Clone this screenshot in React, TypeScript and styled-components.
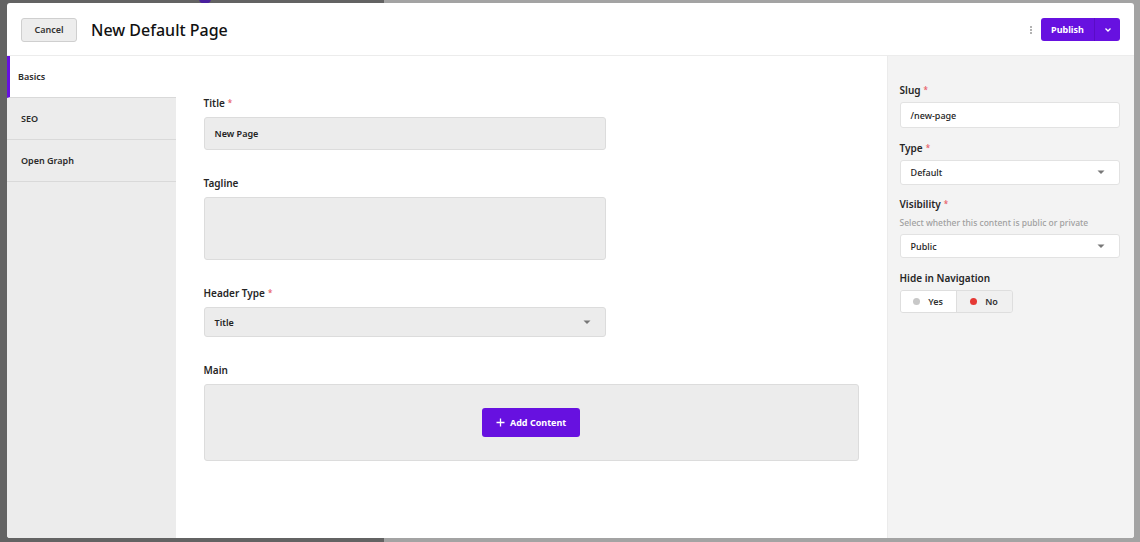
import React from "react"
import styled, { createGlobalStyle } from "styled-components"

const GlobalStyle = createGlobalStyle`
  html, body {
    margin: 0;
    padding: 0;
    height: 100%;
  }
  body {
    font-family: "Noto Sans", "Open Sans", sans-serif;
    color: #1e1e1e;
    overflow: hidden;
  }
`

const Backdrop = styled.div`
  position: relative;
  width: 1140px;
  height: 542px;
  background: linear-gradient(to right, #636363 0, #636363 384px, #a3a3a3 384px);
  padding: 3px 6px 4px 7px;
  box-sizing: border-box;
  overflow: hidden;
`

const BehindDot = styled.span`
  position: absolute;
  left: 199px;
  top: -6px;
  width: 12px;
  height: 10px;
  border-radius: 50%;
  background: #4a1f9e;
`

const Modal = styled.div`
  position: relative;
  height: 100%;
  background: #fff;
  border-radius: 3px;
  display: flex;
  flex-direction: column;
  overflow: hidden;
`

const Header = styled.header`
  height: 53px;
  flex-shrink: 0;
  display: flex;
  align-items: center;
  padding: 1px 14px 0;
  border-bottom: 1px solid #ececec;
  box-sizing: border-box;
`

const CancelButton = styled.button`
  width: 56px;
  height: 24px;
  border: 1px solid #cfcfcf;
  border-radius: 3px;
  background: #ededed;
  font-family: inherit;
  font-size: 9px;
  font-weight: 600;
  color: #333;
  padding: 0;
`

const PageTitle = styled.h1`
  margin: 0 0 0 14px;
  font-size: 16px;
  font-weight: 500;
  color: #111;
  flex: 1;
`

const MoreDots = styled.span`
  display: flex;
  flex-direction: column;
  gap: 1px;
  margin-right: 9px;
  & > i {
    width: 2px;
    height: 2px;
    background: #9a9a9a;
    border-radius: 50%;
  }
`

const SplitButton = styled.div`
  display: flex;
  height: 23px;
  border-radius: 3px;
  background: #6711e0;
  overflow: hidden;
`

const PublishButton = styled.button`
  width: 54px;
  border: none;
  background: transparent;
  color: #fff;
  font-family: inherit;
  font-size: 9px;
  font-weight: 700;
  padding: 0;
  border-right: 1px solid #5a0dc6;
`

const CaretButton = styled.button`
  width: 25px;
  border: none;
  background: transparent;
  display: flex;
  align-items: center;
  justify-content: center;
  padding: 0;
`

const Body = styled.div`
  flex: 1;
  display: flex;
  min-height: 0;
`

const Tabs = styled.nav`
  width: 169px;
  background: #ececec;
  display: flex;
  flex-direction: column;
`

const Tab = styled.div<{ $active?: boolean }>`
  height: 42px;
  display: flex;
  align-items: center;
  box-sizing: border-box;
  padding-left: ${p => (p.$active ? "8px" : "14px")};
  border-left: ${p => (p.$active ? "3px solid #6711e0" : "none")};
  background: ${p => (p.$active ? "#fff" : "transparent")};
  border-bottom: 1px solid #d9d9d9;
  font-size: 9px;
  font-weight: 600;
  color: #2a2a2a;
`

const Main = styled.main`
  flex: 1;
  padding: 40px 28px 0 28px;
  display: flex;
  flex-direction: column;
`

const Field = styled.div<{ $width?: string; $gap?: number }>`
  width: ${p => p.$width || "402px"};
  margin-bottom: ${p => p.$gap ?? 0}px;
`

const Label = styled.div`
  font-size: 10px;
  font-weight: 600;
  color: #262626;
  margin-bottom: 7px;
  line-height: 14px;
`

const Required = styled.span`
  color: #e8646c;
  font-size: 8px;
  margin-left: 3px;
  vertical-align: 1px;
`

const GrayInput = styled.div<{ $height: number }>`
  height: ${p => p.$height}px;
  background: #ececec;
  border: 1px solid #dcdcdc;
  border-radius: 3px;
  box-sizing: border-box;
  display: flex;
  align-items: center;
  justify-content: space-between;
  padding: 0 14px 0 10px;
  font-size: 9px;
  font-weight: 600;
  color: #222;
`

const ContentArea = styled.div`
  height: 77px;
  background: #ececec;
  border: 1px solid #dcdcdc;
  border-radius: 3px;
  box-sizing: border-box;
  display: flex;
  align-items: center;
  justify-content: center;
`

const AddButton = styled.button`
  width: 98px;
  height: 29px;
  border: none;
  border-radius: 3px;
  background: #6711e0;
  color: #fff;
  font-family: inherit;
  font-size: 9px;
  font-weight: 700;
  display: flex;
  align-items: center;
  justify-content: center;
  gap: 5px;
  padding: 0;
`

const Sidebar = styled.aside`
  width: 248px;
  background: #f3f3f3;
  border-left: 1px solid #ebebeb;
  box-sizing: border-box;
  padding: 27px 14px 0 12px;
  display: flex;
  flex-direction: column;
`

const SideLabel = styled(Label)`
  margin-bottom: 5px;
`

const Hint = styled.div`
  font-size: 8.5px;
  font-weight: 500;
  color: #a0a0a0;
  margin: 1px 0 5px;
  line-height: 12px;
`

const WhiteInput = styled.div<{ $gap: number; $height?: number }>`
  height: ${p => p.$height ?? 25}px;
  background: #fff;
  border: 1px solid #e2e2e2;
  border-radius: 3px;
  box-sizing: border-box;
  display: flex;
  align-items: center;
  justify-content: space-between;
  padding: 0 14px 0 10px;
  font-size: 9px;
  font-weight: 500;
  color: #222;
  margin-bottom: ${p => p.$gap}px;
`

const Toggle = styled.div`
  display: flex;
  width: 113px;
  height: 23px;
  border: 1px solid #dedede;
  border-radius: 3px;
  overflow: hidden;
  box-sizing: border-box;
`

const ToggleOption = styled.div<{ $selected?: boolean }>`
  flex: 1;
  display: flex;
  align-items: center;
  justify-content: center;
  gap: 8px;
  background: ${p => (p.$selected ? "#f0f0f0" : "#fff")};
  border-left: ${p => (p.$selected ? "1px solid #dedede" : "none")};
  font-size: 9px;
  font-weight: 600;
  color: #333;
`

const Dot = styled.span<{ $color: string }>`
  width: 7px;
  height: 7px;
  border-radius: 50%;
  background: ${p => p.$color};
`

const Caret = () => (
  <svg width="8" height="5" viewBox="0 0 8 5">
    <path d="M0.5 0.5 L4 4 L7.5 0.5 Z" fill="#777" />
  </svg>
)

const Chevron = () => (
  <svg width="8" height="6" viewBox="0 0 8 6">
    <path d="M1.5 1.5 L4 4 L6.5 1.5" stroke="#fff" strokeWidth="1.3" fill="none" />
  </svg>
)

const Plus = () => (
  <svg width="9" height="9" viewBox="0 0 9 9">
    <path d="M4.5 0.5 V8.5 M0.5 4.5 H8.5" stroke="#fff" strokeWidth="1.3" />
  </svg>
)

const App = () => {
  return (
    <>
      <GlobalStyle />
      <Backdrop>
        <BehindDot />
        <Modal>
          <Header>
            <CancelButton>Cancel</CancelButton>
            <PageTitle>New Default Page</PageTitle>
            <MoreDots><i /><i /><i /></MoreDots>
            <SplitButton>
              <PublishButton>Publish</PublishButton>
              <CaretButton><Chevron /></CaretButton>
            </SplitButton>
          </Header>
          <Body>
            <Tabs>
              <Tab $active>Basics</Tab>
              <Tab>SEO</Tab>
              <Tab>Open Graph</Tab>
            </Tabs>
            <Main>
              <Field $gap={26}>
                <Label>Title<Required>*</Required></Label>
                <GrayInput $height={33}>New Page</GrayInput>
              </Field>
              <Field $gap={26}>
                <Label>Tagline</Label>
                <GrayInput $height={63} />
              </Field>
              <Field $gap={26}>
                <Label>Header Type<Required>*</Required></Label>
                <GrayInput $height={30}>Title<Caret /></GrayInput>
              </Field>
              <Field $width="655px">
                <Label>Main</Label>
                <ContentArea>
                  <AddButton><Plus />Add Content</AddButton>
                </ContentArea>
              </Field>
            </Main>
            <Sidebar>
              <SideLabel>Slug<Required>*</Required></SideLabel>
              <WhiteInput $gap={13} $height={26}>/new-page</WhiteInput>
              <SideLabel>Type<Required>*</Required></SideLabel>
              <WhiteInput $gap={12}>Default<Caret /></WhiteInput>
              <SideLabel>Visibility<Required>*</Required></SideLabel>
              <Hint>Select whether this content is public or private</Hint>
              <WhiteInput $gap={13} $height={24}>Public<Caret /></WhiteInput>
              <SideLabel>Hide in Navigation</SideLabel>
              <Toggle>
                <ToggleOption><Dot $color="#c8c8c8" />Yes</ToggleOption>
                <ToggleOption $selected><Dot $color="#e53935" />No</ToggleOption>
              </Toggle>
            </Sidebar>
          </Body>
        </Modal>
      </Backdrop>
    </>
  )
}

export default App
